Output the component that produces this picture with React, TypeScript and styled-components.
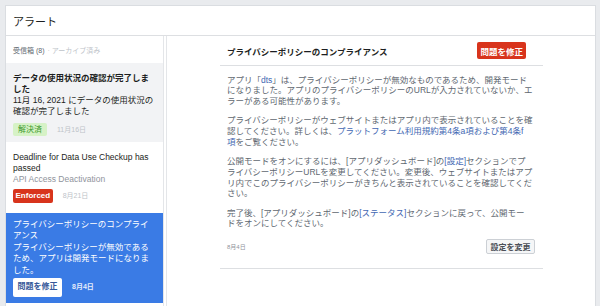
import React from "react";
import styled, { createGlobalStyle, css } from "styled-components";

const Global = createGlobalStyle`
  html, body { margin: 0; padding: 0; }
  body {
    background: #e9ebee;
    font-family: "Liberation Sans", "Noto Sans CJK JP", sans-serif;
    color: #1c1e21;
    overflow: hidden;
  }
  * { box-sizing: border-box; }
`;

const Panel = styled.div`
  margin: 5px 0 0 5px;
  width: 591px;
  height: calc(100vh - 5px);
  background: #fff;
  border: 1px solid #dadde1;
  border-bottom: 0;
  display: flex;
  flex-direction: column;
  overflow: hidden;
`;

const Header = styled.div`
  height: 30px;
  border-bottom: 1px solid #dddfe2;
  display: flex;
  align-items: center;
  padding-left: 7px;
  font-size: 11px;
  color: #1c1e21;
  flex-shrink: 0;
`;

const Body = styled.div`
  display: flex;
  flex: 1;
  gap: 2px;
  min-height: 0;
`;

const LeftCol = styled.div`
  width: 158px;
  border-right: 1px solid #e4e6e9;
  display: flex;
  flex-direction: column;
`;

const Tabs = styled.div`
  height: 27px;
  display: flex;
  align-items: center;
  padding-left: 7px;
  font-size: 7px;
  color: #606770;
  gap: 3px;
`;

const TabMuted = styled.span`
  color: #bec3c9;
`;

type Variant = "read" | "plain" | "active";

const Item = styled.div<{ $variant: Variant }>`
  padding: 0 8px 0 7px;
  font-size: 8.5px;
  line-height: 11px;
  ${(p) =>
    p.$variant === "read" &&
    css`
      background: #f2f3f5;
      padding-top: 9.5px;
      padding-bottom: 6px;
    `}
  ${(p) =>
    p.$variant === "plain" &&
    css`
      background: #fff;
      padding-top: 10.5px;
      padding-bottom: 10px;
    `}
  ${(p) =>
    p.$variant === "active" &&
    css`
      background: #3a7be5;
      color: #fff;
      padding-top: 6px;
      padding-bottom: 6px;
      line-height: 11.5px;
    `}
`;

const ItemTitle = styled.div<{ $bold?: boolean }>`
  font-weight: ${(p) => (p.$bold ? 700 : 400)};
`;

const ItemText = styled.div<{ $muted?: boolean }>`
  color: ${(p) => (p.$muted ? "#90949c" : "inherit")};
`;

const Meta = styled.div<{ $mt: number }>`
  display: flex;
  align-items: center;
  gap: 10px;
  margin-top: ${(p) => p.$mt}px;
`;

const Badge = styled.span<{ $tone: "green" | "red" }>`
  display: inline-flex;
  align-items: center;
  justify-content: center;
  font-size: 8px;
  border-radius: 2px;
  padding: 0 5px;
  ${(p) =>
    p.$tone === "green"
      ? css`
          height: 13px;
          background: #d6f2c6;
          color: #3c9a2c;
        `
      : css`
          height: 14px;
          background: #d8341c;
          color: #fff;
          font-weight: 700;
          padding: 0 2.5px;
        `}
`;

const ItemDate = styled.span<{ $light?: boolean }>`
  font-size: 7px;
  color: ${(p) => (p.$light ? "#e4ecfb" : "#bec3c9")};
  font-weight: ${(p) => (p.$light ? 700 : 400)};
`;

const WhiteButton = styled.span`
  display: inline-flex;
  align-items: center;
  height: 19px;
  padding: 0 4.5px;
  background: #fff;
  border-radius: 2px;
  color: #365899;
  font-size: 8px;
  font-weight: 700;
`;

const RightCol = styled.div`
  flex: 1;
  border-left: 1px solid #e4e6e9;
  padding-left: 53px;
`;

const Detail = styled.div`
  width: 323px;
`;

const DetailHead = styled.div`
  height: 30px;
  display: flex;
  align-items: center;
  justify-content: space-between;
  padding: 0 17px 0 7px;
  border-bottom: 1px solid #dddfe2;
`;

const DetailTitle = styled.div`
  font-size: 8.5px;
  font-weight: 700;
  color: #1c1e21;
`;

const RedButton = styled.span`
  display: inline-flex;
  align-items: center;
  height: 17px;
  padding: 0 3px;
  background: #d8341c;
  color: #fff;
  border-radius: 2px;
  font-size: 8.5px;
  font-weight: 700;
`;

const DetailBody = styled.div`
  padding: 8.7px 8px 14px 7px;
  border-bottom: 1px solid #dddfe2;
`;

const Para = styled.p`
  margin: 0 0 8.6px;
  font-size: 8.5px;
  line-height: 10.7px;
  color: #606770;
  white-space: nowrap;
`;

const Link = styled.span`
  color: #4267b2;
`;

const FooterRow = styled.div`
  display: flex;
  align-items: center;
  justify-content: space-between;
  margin-top: 10px;
  height: 15px;
`;

const SmallDate = styled.span`
  font-size: 6px;
  color: #90949c;
`;

const GrayButton = styled.span`
  display: inline-flex;
  align-items: center;
  height: 15px;
  padding: 0 3.5px;
  background: #f5f6f7;
  border: 1px solid #ccd0d5;
  border-radius: 2px;
  color: #4b4f56;
  font-size: 8px;
  font-weight: 700;
`;

export default function App() {
  return (
    <>
      <Global />
      <Panel>
        <Header>アラート</Header>
        <Body>
          <LeftCol>
            <Tabs>
              <span>受信箱 (8)</span>
              <TabMuted>· アーカイブ済み</TabMuted>
            </Tabs>
            <Item $variant="read">
              <ItemTitle $bold>データの使用状況の確認が完了しました</ItemTitle>
              <ItemText>11月 16, 2021 にデータの使用状況の確認が完了しました</ItemText>
              <Meta $mt={6}>
                <Badge $tone="green">解決済</Badge>
                <ItemDate>11月16日</ItemDate>
              </Meta>
            </Item>
            <Item $variant="plain">
              <ItemTitle>Deadline for Data Use Checkup has passed</ItemTitle>
              <ItemText $muted>API Access Deactivation</ItemText>
              <Meta $mt={3.5}>
                <Badge $tone="red">Enforced</Badge>
                <ItemDate>8月21日</ItemDate>
              </Meta>
            </Item>
            <Item $variant="active">
              <ItemTitle>プライバシーポリシーのコンプライアンス</ItemTitle>
              <ItemText>
                プライバシーポリシーが無効であるため、アプリは開発モードになりました。
              </ItemText>
              <Meta $mt={1.5}>
                <WhiteButton>問題を修正</WhiteButton>
                <ItemDate $light>8月4日</ItemDate>
              </Meta>
            </Item>
          </LeftCol>
          <RightCol>
            <Detail>
              <DetailHead>
                <DetailTitle>プライバシーポリシーのコンプライアンス</DetailTitle>
                <RedButton>問題を修正</RedButton>
              </DetailHead>
              <DetailBody>
                <Para>
                  アプリ「<Link>dts</Link>」は、プライバシーポリシーが無効なものであるため、開発モード
                  <br />
                  になりました。アプリのプライバシーポリシーのURLが入力されていないか、エ
                  <br />
                  ラーがある可能性があります。
                </Para>
                <Para>
                  プライバシーポリシーがウェブサイトまたはアプリ内で表示されていることを確
                  <br />
                  認してください。詳しくは、
                  <Link>プラットフォーム利用規約第4条a項および第4条f</Link>
                  <br />
                  <Link>項</Link>をご覧ください。
                </Para>
                <Para>
                  公開モードをオンにするには、[アプリダッシュボード]の<Link>[設定]</Link>セクションでプ
                  <br />
                  ライバシーポリシーURLを変更してください。変更後、ウェブサイトまたはアプ
                  <br />
                  リ内でこのプライバシーポリシーがきちんと表示されていることを確認してくだ
                  <br />
                  さい。
                </Para>
                <Para>
                  完了後、[アプリダッシュボード]の<Link>[ステータス]</Link>セクションに戻って、公開モー
                  <br />
                  ドをオンにしてください。
                </Para>
                <FooterRow>
                  <SmallDate>8月4日</SmallDate>
                  <GrayButton>設定を変更</GrayButton>
                </FooterRow>
              </DetailBody>
            </Detail>
          </RightCol>
        </Body>
      </Panel>
    </>
  );
}
